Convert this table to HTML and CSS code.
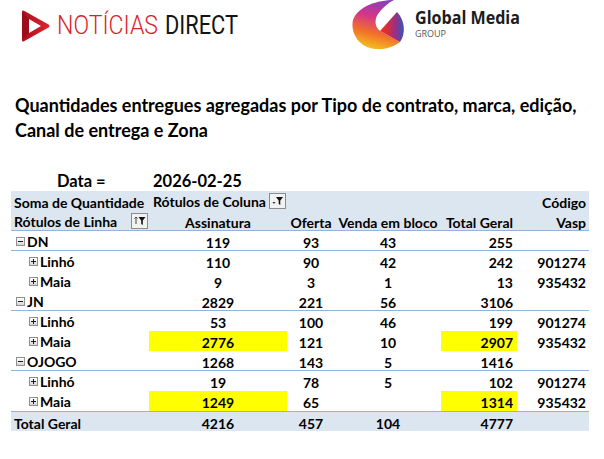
FILE: index.html
```html
<!DOCTYPE html>
<html lang="pt">
<head>
<meta charset="utf-8">
<title>Quantidades entregues</title>
<link rel="stylesheet" href="styles.css">
</head>
<body>
<div class="page">
  <div class="logos">
    <div class="nd-logo">
      <svg class="nd-icon" width="28" height="32" viewBox="0 0 28 32">
        <defs>
          <linearGradient id="ndg" x1="0" y1="0" x2="1" y2="0">
            <stop offset="0" stop-color="#a80f1e"/>
            <stop offset="1" stop-color="#e1242d"/>
          </linearGradient>
        </defs>
        <path fill="url(#ndg)" fill-rule="evenodd" d="M2,0.8 L26.5,14.6 Q28.5,16 26.5,17.4 L2,31.2 Q0,32.2 0,30 L0,2 Q0,-0.2 2,0.8 Z M7,9 L19,16 L7,23 Z"/>
        <path fill="#9c0c1b" d="M0,2.5 L7,9 L7,23 L0,29.5 Z"/>
      </svg>
      <svg class="nd-text" width="200" height="36" viewBox="0 0 200 36">
        <text x="0" y="29" class="nd-red" textLength="101" lengthAdjust="spacingAndGlyphs">NOTÍCIAS</text>
        <text x="108" y="29" class="nd-black" textLength="73" lengthAdjust="spacingAndGlyphs">DIRECT</text>
      </svg>
    </div>
    <div class="gm-logo">
      <svg class="gm-icon" width="58" height="50" viewBox="0 0 58 50">
        <defs>
          <linearGradient id="gmr" x1="0.6" y1="0" x2="0.35" y2="1">
            <stop offset="0" stop-color="#8a3fb5"/>
            <stop offset="0.35" stop-color="#d2358c"/>
            <stop offset="0.68" stop-color="#f3702a"/>
            <stop offset="1" stop-color="#f2c61e"/>
          </linearGradient>
          <linearGradient id="gmt" x1="0" y1="0" x2="1" y2="0">
            <stop offset="0.2" stop-color="#e62f28"/>
            <stop offset="0.65" stop-color="#9a2f86"/>
            <stop offset="1" stop-color="#2f57b8"/>
          </linearGradient>
        </defs>
        <path fill="url(#gmr)" d="M44,0 C28,0 8,6 3,20 C0,34 10,48 26,49 C38,50 46,45 50,42 L30,31 C25,27 24,20 28,14 C32,8 38,3 44,0 Z"/>
        <path fill="url(#gmt)" d="M30,31 L47,12 C55,20 56,34 50,42 Z"/>
      </svg>
      <svg class="gm-text" width="130" height="44" viewBox="0 0 130 44">
        <text x="0" y="24" class="gm-name" textLength="105" lengthAdjust="spacingAndGlyphs">Global Media</text>
        <text x="0" y="37" class="gm-group" textLength="31" lengthAdjust="spacingAndGlyphs">GROUP</text>
      </svg>
    </div>
  </div>

  <h1 class="title">Quantidades entregues agregadas por Tipo de contrato, marca, edição,<br>Canal de entrega e Zona</h1>

  <div class="date-row">
    <span class="date-label">Data =</span>
    <span class="date-value">2026-02-25</span>
  </div>

  <div class="pivot">
    <div class="row head">
      <div class="cell l pl3">Soma de Quantidade</div>
      <div class="cell filter-cell pl4"><span>Rótulos de Coluna</span>
        <svg class="filter" width="17" height="16" viewBox="0 0 17 16"><rect x="0.5" y="0.5" width="16" height="15" fill="#f2f2f2" stroke="#8c8c8c"/><path d="M3.5,9 L6.5,9 L5,11 Z" fill="#333"/><path d="M7,4 L14,4 L11.3,7.5 L11.3,12 L9.7,11 L9.7,7.5 Z" fill="#111"/></svg>
      </div>
      <div class="cell"></div>
      <div class="cell"></div>
      <div class="cell"></div>
      <div class="cell r pr3">Código</div>
    </div>
    <div class="row head sep">
      <div class="cell filter-cell pl3"><span>Rótulos de Linha</span>
        <svg class="filter" width="17" height="16" viewBox="0 0 17 16"><rect x="0.5" y="0.5" width="16" height="15" fill="#f2f2f2" stroke="#8c8c8c"/><path d="M5,4 L5,11 M3.5,5.5 L5,4 L6.5,5.5" stroke="#444" stroke-width="1" fill="none"/><path d="M7.5,4 L14.5,4 L11.8,7.5 L11.8,12 L10.2,11 L10.2,7.5 Z" fill="#111"/></svg>
      </div>
      <div class="cell c">Assinatura</div>
      <div class="cell c">Oferta</div>
      <div class="cell c">Venda em bloco</div>
      <div class="cell r pr4">Total Geral</div>
      <div class="cell r pr3">Vasp</div>
    </div>

    <div class="row sep">
      <div class="cell label lvl1"><span class="tog minus"></span>DN</div>
      <div class="cell c">119</div><div class="cell c">93</div><div class="cell c">43</div><div class="cell r pr4">255</div><div class="cell r pr3"></div>
    </div>
    <div class="row">
      <div class="cell label lvl2"><span class="tog plus"></span>Linhó</div>
      <div class="cell c">110</div><div class="cell c">90</div><div class="cell c">42</div><div class="cell r pr4">242</div><div class="cell r pr3">901274</div>
    </div>
    <div class="row">
      <div class="cell label lvl2"><span class="tog plus"></span>Maia</div>
      <div class="cell c">9</div><div class="cell c">3</div><div class="cell c">1</div><div class="cell r pr4">13</div><div class="cell r pr3">935432</div>
    </div>

    <div class="row sep">
      <div class="cell label lvl1"><span class="tog minus"></span>JN</div>
      <div class="cell c">2829</div><div class="cell c">221</div><div class="cell c">56</div><div class="cell r pr4">3106</div><div class="cell r pr3"></div>
    </div>
    <div class="row">
      <div class="cell label lvl2"><span class="tog plus"></span>Linhó</div>
      <div class="cell c">53</div><div class="cell c">100</div><div class="cell c">46</div><div class="cell r pr4">199</div><div class="cell r pr3">901274</div>
    </div>
    <div class="row">
      <div class="cell label lvl2"><span class="tog plus"></span>Maia</div>
      <div class="cell c hl">2776</div><div class="cell c">121</div><div class="cell c">10</div><div class="cell r pr4 hl">2907</div><div class="cell r pr3">935432</div>
    </div>

    <div class="row sep">
      <div class="cell label lvl1"><span class="tog minus"></span>OJOGO</div>
      <div class="cell c">1268</div><div class="cell c">143</div><div class="cell c">5</div><div class="cell r pr4">1416</div><div class="cell r pr3"></div>
    </div>
    <div class="row">
      <div class="cell label lvl2"><span class="tog plus"></span>Linhó</div>
      <div class="cell c">19</div><div class="cell c">78</div><div class="cell c">5</div><div class="cell r pr4">102</div><div class="cell r pr3">901274</div>
    </div>
    <div class="row">
      <div class="cell label lvl2"><span class="tog plus"></span>Maia</div>
      <div class="cell c hl">1249</div><div class="cell c">65</div><div class="cell c"></div><div class="cell r pr4 hl">1314</div><div class="cell r pr3">935432</div>
    </div>

    <div class="row total">
      <div class="cell l pl3">Total Geral</div>
      <div class="cell c">4216</div><div class="cell c">457</div><div class="cell c">104</div><div class="cell r pr4">4777</div><div class="cell r pr3"></div>
    </div>
  </div>
</div>
</body>
</html>
```

FILE: styles.css
```css
* { box-sizing: border-box; }

body {
  margin: 0;
  background: #ffffff;
  color: #000000;
  font-family: Lato, "Liberation Sans", sans-serif;
}

.page {
  width: 604px;
  height: 459px;
  overflow: hidden;
}

/* ---------- logos ---------- */
.logos {
  display: flex;
  height: 50px;
}

.nd-logo {
  display: flex;
  align-items: flex-start;
  width: 350px;
  padding-left: 22px;
}

.nd-icon { margin-top: 10px; }

.nd-text {
  margin-top: 5px;
  margin-left: 7px;
}

.nd-red {
  font-family: Roboto, "Liberation Sans", sans-serif;
  font-weight: 300;
  font-size: 26px;
  fill: #d91f2b;
}

.nd-black {
  font-family: Roboto, "Liberation Sans", sans-serif;
  font-weight: 400;
  font-size: 26px;
  fill: #141414;
}

.gm-logo {
  display: flex;
  align-items: flex-start;
}

.gm-text { margin-left: 7px; }

.gm-name {
  font-family: "Open Sans", Lato, sans-serif;
  font-weight: 700;
  font-size: 17px;
  fill: #1c1c1c;
}

.gm-group {
  font-family: "Open Sans", Lato, sans-serif;
  font-weight: 400;
  font-size: 8.5px;
  fill: #555555;
}

/* ---------- title ---------- */
.title {
  margin: 43px 0 0 0;
  padding-left: 15px;
  font-size: 18px;
  line-height: 25px;
  font-weight: 700;
  white-space: nowrap;
}

.date-row {
  display: flex;
  margin-top: 28px;
  height: 20px;
  line-height: 20px;
  font-size: 16.5px;
  font-weight: 700;
}

.date-label {
  margin-left: 57px;
  width: 96px;
}

/* ---------- pivot table ---------- */
.pivot {
  margin-left: 11px;
  width: 578px;
  font-size: 14px;
  font-weight: 700;
}

.row {
  display: grid;
  grid-template-columns: 138px 138px 48px 106px 76px 72px;
  height: 20px;
}

.cell {
  height: 19px;
  line-height: 19px;
  padding-top: 2px;
  white-space: nowrap;
}

.head { background: #dce6f1; }

.sep { border-bottom: 1px solid #95b3d7; }

.total {
  background: #dce6f1;
  border-top: 1px solid #95b3d7;
}

.l { text-align: left; }
.c { text-align: center; }
.r { text-align: right; }
.pl3 { padding-left: 3px; }
.pl4 { padding-left: 4px; }
.pr3 { padding-right: 3px; }
.pr4 { padding-right: 4px; }

.hl { background: #ffff00; height: 20px; }

.filter-cell {
  display: flex;
  align-items: center;
  justify-content: space-between;
  padding-top: 0;
  padding-right: 1px;
}

.filter-cell span { padding-top: 2px; }

.filter { display: block; }

.label {
  display: flex;
  align-items: center;
}

.lvl1 { padding-left: 5px; }
.lvl2 { padding-left: 18px; }

.tog {
  position: relative;
  width: 9px;
  height: 9px;
  margin-right: 2px;
  border: 1px solid #8f8f8f;
  background: linear-gradient(#ffffff, #d6d6d6);
  flex: none;
}

.tog::before {
  content: "";
  position: absolute;
  left: 1px;
  top: 3px;
  width: 5px;
  height: 1px;
  background: #1a1a1a;
}

.plus::after {
  content: "";
  position: absolute;
  left: 3px;
  top: 1px;
  width: 1px;
  height: 5px;
  background: #1a1a1a;
}
```
